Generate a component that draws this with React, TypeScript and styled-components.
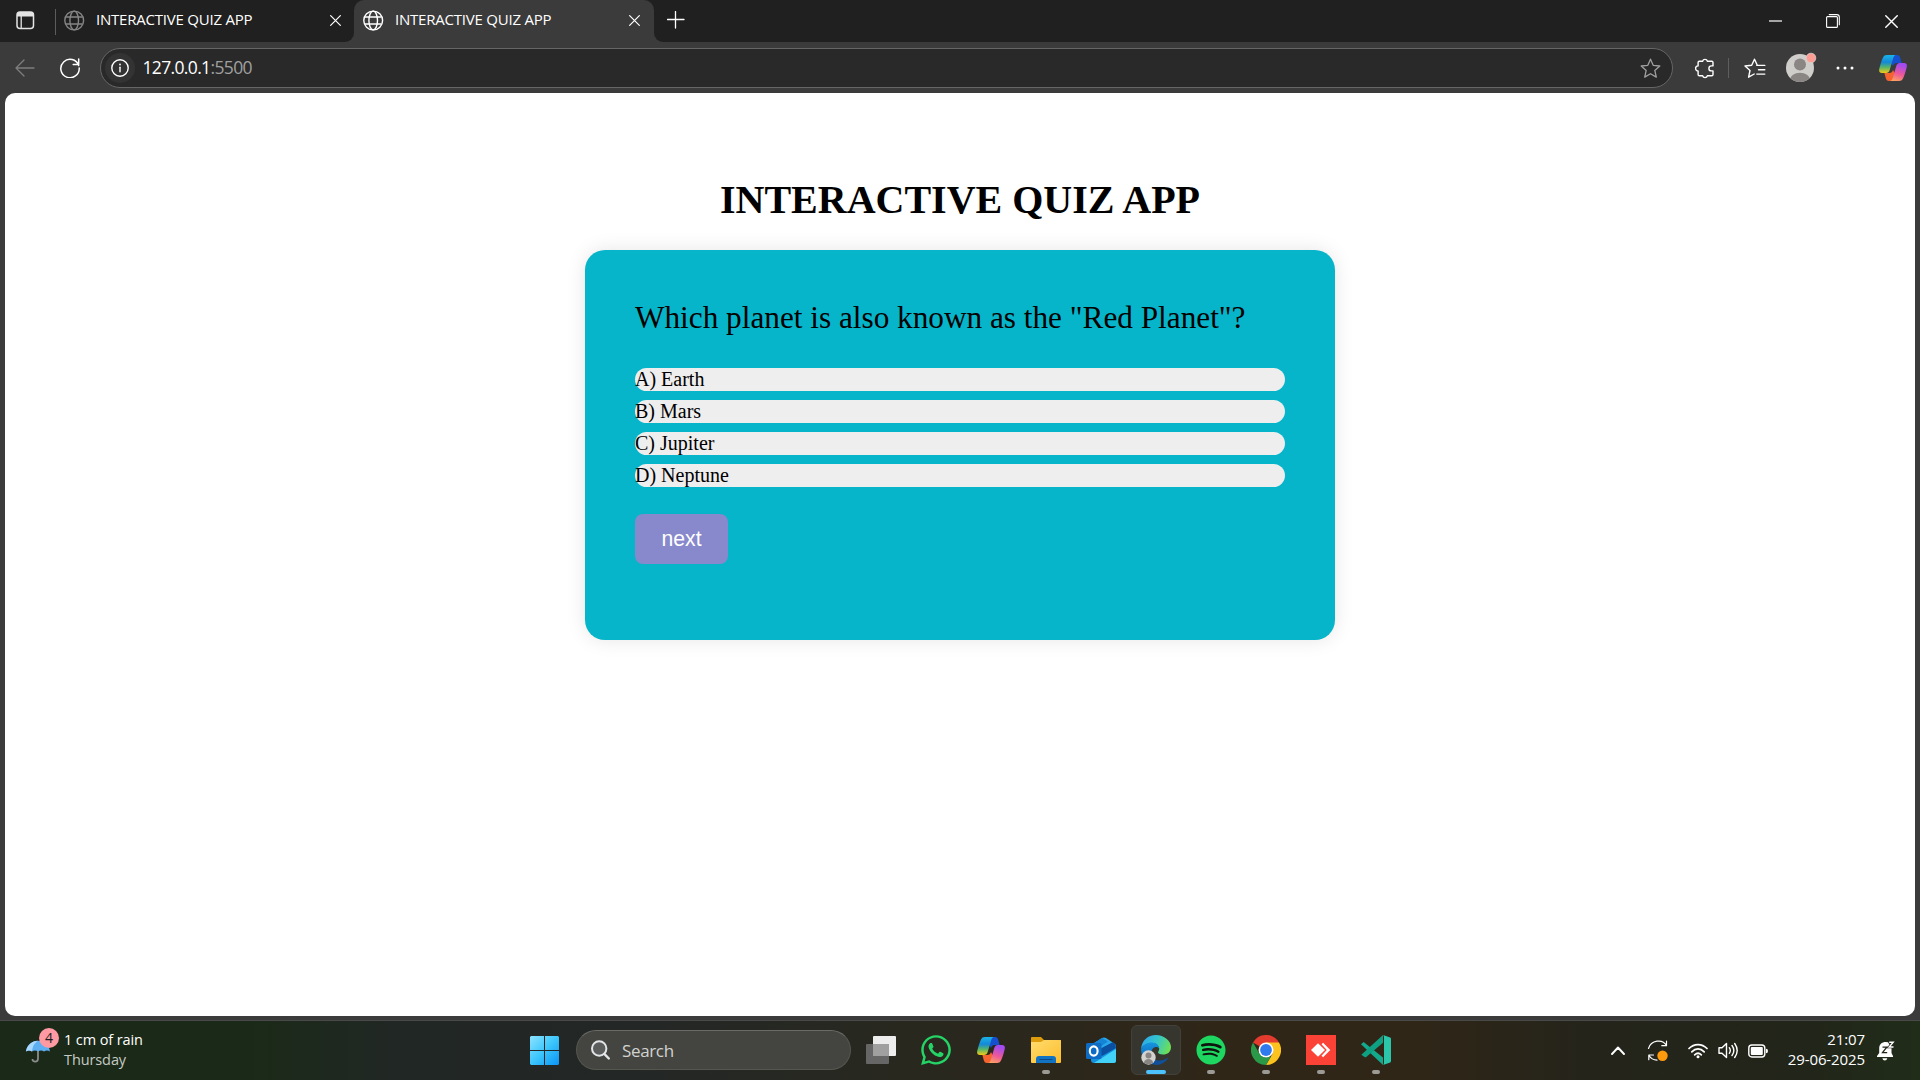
import React, { useId } from "react";
import styled, { createGlobalStyle } from "styled-components";
import { FaWhatsapp, FaSpotify } from "react-icons/fa";

const GlobalStyle = createGlobalStyle`
  html, body { margin: 0; padding: 0; background: #3b3b3b; overflow: hidden; }
  *, *::before, *::after { box-sizing: border-box; }
  svg { display: block; flex: none; }
`;

const uiFont = `"Open Sans", "Noto Sans", sans-serif`;

const Desktop = styled.div`
  width: 1920px;
  height: 1080px;
  display: flex;
  flex-direction: column;
  background: #3b3b3b;
  font-family: ${uiFont};
  color: #fff;
`;

/* ---------- title bar ---------- */

const TitleBar = styled.header`
  height: 43px;
  display: flex;
  background: #3b3b3b;
`;

const StripSection = styled.div<{ $grow?: boolean; $side: "left" | "right" }>`
  display: flex;
  height: 42px;
  background: #202020;
  width: ${(p) => (p.$grow ? "auto" : "354px")};
  flex: ${(p) => (p.$grow ? "1" : "none")};
  border-radius: ${(p) => (p.$side === "left" ? "0 0 9px 0" : "0 0 0 9px")};
`;

const WorkspaceButton = styled.div`
  width: 56px;
  height: 26px;
  margin-top: 9px;
  padding: 2px 0 0 16px;
  border-right: 1px solid #5c5c5c;
`;

const Tab = styled.div<{ $active?: boolean }>`
  display: flex;
  align-items: center;
  width: ${(p) => (p.$active ? "300px" : "298px")};
  height: ${(p) => (p.$active ? "43px" : "40px")};
  padding: 0 ${(p) => (p.$active ? "14px" : "13px")} ${(p) => (p.$active ? "3px" : "0")} ${(p) => (p.$active ? "9px" : "8px")};
  background: ${(p) => (p.$active ? "#3b3b3b" : "transparent")};
`;

const ActiveTabBacking = styled.div`
  background: linear-gradient(#202020 50%, #3b3b3b 50%);
  & > div { border-radius: 10px 10px 0 0; }
`;

const TabTitle = styled.span`
  flex: 1;
  margin-left: 11px;
  padding-bottom: 2px;
  font-size: 15px;
  line-height: 20px;
  letter-spacing: -0.22px;
  white-space: nowrap;
`;

const NewTab = styled.div`
  padding: 11px 0 0 13px;
`;

const WindowControls = styled.div`
  display: flex;
  align-items: center;
  margin-left: auto;
  height: 42px;
`;

const ControlButton = styled.div`
  width: 58px;
  display: flex;
  justify-content: center;
`;

/* ---------- toolbar ---------- */

const Toolbar = styled.nav`
  height: 50px;
  display: flex;
  align-items: center;
`;

const ToolSlot = styled.div<{ $w: number }>`
  width: ${(p) => p.$w}px;
  height: 40px;
  display: flex;
  align-items: center;
  justify-content: center;
  flex: none;
`;

const AddressBar = styled.div`
  width: 1573px;
  height: 40px;
  display: flex;
  align-items: center;
  border: 1px solid #666;
  border-radius: 20px;
  background: #292929;
  padding: 0 11px 0 4px;
`;

const InfoBadge = styled.div`
  width: 30px;
  height: 30px;
  border-radius: 50%;
  background: #333;
  display: flex;
  align-items: center;
  justify-content: center;
`;

const Url = styled.span`
  flex: 1;
  margin-left: 7.5px;
  padding-bottom: 2px;
  font-size: 17.5px;
  line-height: 24px;
  letter-spacing: -0.65px;
`;

const Port = styled.span`
  color: #a0a0a0;
`;

const ToolDivider = styled.div`
  width: 1px;
  height: 20px;
  background: #5e5e5e;
`;

/* ---------- page ---------- */

const Page = styled.main`
  height: 923px;
  margin: 0 5px;
  background: #fff;
  border-radius: 10px;
  display: flex;
  flex-direction: column;
  align-items: center;
  color: #000;
  font-family: "Liberation Serif", "Times New Roman", serif;
`;

const Heading = styled.h1`
  margin: 84px 0 27px;
  font-size: 40px;
  line-height: 46px;
  font-weight: bold;
`;

const QuizCard = styled.section`
  width: 750px;
  height: 390px;
  padding: 50px;
  border-radius: 20px;
  background: #07b5ca;
  box-shadow: 0 0 20px rgba(0, 0, 0, 0.1);
`;

const Question = styled.p`
  margin: 0 0 32px;
  font-size: 31.25px;
  line-height: 36px;
`;

const Options = styled.ul`
  margin: 0 0 27px;
  padding: 0;
  list-style: none;
  display: flex;
  flex-direction: column;
  gap: 9px;
`;

const Option = styled.li`
  height: 23px;
  font-size: 20px;
  line-height: 23px;
  border-radius: 12px;
  background: #eee;
`;

const NextButton = styled.button`
  width: 93px;
  height: 50px;
  padding: 0;
  border: 0;
  border-radius: 8px;
  background: #8888cc;
  color: #fff;
  font: 21.2px "Liberation Sans", Arial, sans-serif;
`;

/* ---------- taskbar ---------- */

const Taskbar = styled.footer`
  height: 60px;
  margin-top: 4px;
  border-top: 1px solid #494949;
  display: grid;
  grid-template-columns: 520px 881px 1fr;
  background: linear-gradient(90deg, #1b2a18 0, #1b2a18 250px, #212725 400px, #232726 620px, #28281f 900px, #302617 1250px, #302617 1400px, #24241b 1600px, #22251a 1800px, #202d19 1920px);
`;

const Weather = styled.div`
  display: flex;
  padding: 5px 0 0 25px;
`;

const WeatherText = styled.div`
  margin: 4px 0 0 4px;
  font-size: 14.5px;
  line-height: 20px;
  letter-spacing: -0.1px;
`;

const Muted = styled.div`
  color: #c6cac5;
`;

const Dock = styled.div`
  display: flex;
  gap: 5px;
  padding-top: 4px;
`;

const AppSlot = styled.div<{ $active?: boolean }>`
  width: 50px;
  height: 50px;
  display: flex;
  flex-direction: column;
  align-items: center;
  padding-top: ${(p) => (p.$active ? "9px" : "10px")};
  border: ${(p) => (p.$active ? "1px solid #42403a" : "0")};
  border-radius: 6px;
  background: ${(p) => (p.$active ? "#36352e" : "transparent")};
`;

const IconBox = styled.div`
  width: 30px;
  height: 30px;
  flex: none;
  display: flex;
  align-items: center;
  justify-content: center;
`;

const Running = styled.div<{ $active?: boolean }>`
  width: ${(p) => (p.$active ? 20 : 8)}px;
  height: 4px;
  margin-top: 5px;
  flex: none;
  border-radius: 2px;
  background: ${(p) => (p.$active ? "#4cc2ff" : "#9c9a95")};
`;

const SearchBox = styled.div`
  width: 275px;
  height: 40px;
  margin: 5px 0 0 1px;
  display: flex;
  align-items: center;
  gap: 12px;
  padding-left: 14px;
  border: 1px solid #55564f;
  border-top-color: #6a6b66;
  border-radius: 20px;
  background: #444540;
  color: #d2d2d0;
  font-size: 17px;
  letter-spacing: -0.35px;
`;

const Spotify = styled.div`
  width: 30px;
  height: 30px;
  border-radius: 50%;
  background: radial-gradient(#10140f 60%, transparent 62%);
`;

const Tray = styled.div`
  display: flex;
  align-items: center;
  justify-content: flex-end;
  padding-right: 23px;
`;

const Clock = styled.div`
  width: 92px;
  margin: -4px 10px 0 0;
  text-align: right;
  font-size: 15px;
  line-height: 20px;
  letter-spacing: -0.1px;
  white-space: nowrap;
`;

/* ---------- icons ---------- */

const stroke = { fill: "none", stroke: "#fff", strokeWidth: 1.3, strokeLinecap: "round", strokeLinejoin: "round" } as const;

const WorkspaceIcon = () => (
  <svg width="19" height="19" viewBox="0 0 19 19">
    <rect x="1" y="1" width="16.5" height="16.5" rx="3" fill="none" stroke="#e4e4e4" strokeWidth="1.5" />
    <path d="M1 5.500V4a3 3 0 0 1 3-3h10.500a3 3 0 0 1 3 3v1.500z" fill="#e4e4e4" />
    <path d="M5.200 5v12" stroke="#e4e4e4" strokeWidth="1.3" />
  </svg>
);

const Globe = ({ color }: { color: string }) => (
  <svg width="21" height="21" viewBox="0 0 21 21" fill="none" stroke={color} strokeWidth="1.4">
    <circle cx="10.2" cy="10.5" r="9.4" />
    <ellipse cx="10.2" cy="10.5" rx="4.3" ry="9.4" />
    <path d="M2 7h16.500M2 14h16.500" />
  </svg>
);

const Cross = ({ size = 11 }: { size?: number }) => (
  <svg width={size} height={size} viewBox="0 0 12 12">
    <path d="M.7.7l10.600 10.600M11.300.7L.7 11.300" {...stroke} />
  </svg>
);

const RestoreIcon = () => (
  <svg width="14" height="14" viewBox="0 0 14 14" {...stroke} strokeWidth="1.1">
    <rect x=".6" y="2.6" width="10.800" height="10.800" rx="1" />
    <path d="M3.200.6h7.600a2.500 2.500 0 0 1 2.500 2.500v7.600" />
  </svg>
);

const StarIcon = () => (
  <svg width="21" height="21" viewBox="0 0 21 21" {...stroke} stroke="#a0a0a0">
    <path d="M10.500 1.200l2.700 6.100 6.600.7-5 4.400 1.500 6.700-5.800-3.400-5.800 3.400 1.500-6.700-5-4.400 6.600-.7z" />
  </svg>
);

const PuzzleIcon = () => (
  <svg width="20" height="21" viewBox="0 0 20 21" {...stroke} strokeWidth="1.4">
    <path d="M4.300 3.200h3.300a2.500 2.500 0 0 1 4.800 0h4.400q1.200 0 1.200 1.200v3.500h-1.600a2.500 2.500 0 0 0 0 5h1.600v3.700q0 1.200-1.200 1.200h-4.400a2.500 2.500 0 0 1-4.800 0H4.300q-1.200 0-1.200-1.200v-3.700a2.500 2.500 0 0 1 0-5V4.400q0-1.200 1.200-1.200z" />
  </svg>
);

const FavoritesIcon = () => (
  <svg width="22" height="21" viewBox="0 0 22 21" {...stroke} strokeWidth="1.4">
    <path d="M12.800 7.400h8M14.500 11.800h6.300M12.800 16.100h8M13.300 7.300L10.500 1.200 7.700 7.300 1 8l5 4.500-1.400 6.700 5.600-3.200" />
  </svg>
);

const Avatar = ({ size = 28 }: { size?: number }) => {
  const id = useId();
  return (
    <svg width={size} height={size} viewBox="0 0 28 28" overflow="visible">
      <clipPath id={id}><circle cx="14" cy="14" r="14" /></clipPath>
      <g clipPath={`url(#${id})`}>
        <path d="M0 0h28v28H0z" fill="#d0cecb" />
        <circle cx="14" cy="10.500" r="6" fill="#8a8684" />
        <ellipse cx="14" cy="26" rx="10" ry="7.300" fill="#8a8684" />
      </g>
      <circle cx="25" cy="4" r="4.800" fill="#ff9d95" stroke="#d6d0cd" strokeWidth=".8" />
    </svg>
  );
};

const CopilotIcon = () => {
  const id = useId();
  return (
    <svg width="28" height="26" viewBox="0 0 28 26">
      <defs>
        <linearGradient id={id + "a"} x1="0" y1="0" x2="0" y2="1">
          <stop offset="0" stopColor="#1bb4e8" /><stop offset=".4" stopColor="#1488d8" />
          <stop offset=".68" stopColor="#55b56b" /><stop offset="1" stopColor="#f4c915" />
        </linearGradient>
        <linearGradient id={id + "b"} x1=".3" y1="0" x2="0" y2="1">
          <stop offset="0" stopColor="#a34bf0" /><stop offset=".5" stopColor="#ee5898" />
          <stop offset="1" stopColor="#ffae58" />
        </linearGradient>
      </defs>
      <path d="M8 0h10c2 0 2.700 1 3.300 3l1.300 5h-5c-2 0-3 1-3.600 3z" fill="#1750cf" />
      <path d="M20 26H10c-2 0-2.700-1-3.300-3l-1.300-5h5c2 0 3-1 3.600-3z" fill="#f5632f" />
      <path d="M8 0h9c-1.500 0-2.300 1.700-2.800 3.300L10.700 15c-.6 2-1.700 3-3.700 3H3c-2.500 0-3.300-1.700-2.700-4.200C1.300 9.700 2.500 5.500 4 2.500 4.800.8 6 0 8 0z" fill={`url(#${id}a)`} />
      <path d="M20 26h-9c1.500 0 2.300-1.700 2.800-3.300L17.300 11c.6-2 1.700-3 3.700-3h4c2.500 0 3.300 1.700 2.700 4.200-1 4.100-2.200 8.300-3.700 11.300-.8 1.700-2 2.500-4 2.500z" fill={`url(#${id}b)`} />
    </svg>
  );
};

const UmbrellaIcon = () => (
  <svg width="35" height="38" viewBox="0 0 35 38">
    <path d="M13 22v10.800q0 2.800-2.800 2.800T7.500 33" fill="none" stroke="#8c8c8c" strokeWidth="1.8" />
    <path d="M1 25.500C2 18.500 7 15 13 14.700 19 15 24 18.500 25 25.500q-3-2-6 0-3-2-6 0-3-2-6 0-3-2-6 0z" fill="#5eaef2" />
    <path d="M1 25.500C2 18.500 7 15 13 14.700 9 17.500 7.500 20.500 7 25.500q-3-2-6 0z" fill="#a8d8ff" />
    <circle cx="24" cy="12" r="10" fill="#ff99a4" />
    <text x="24" y="17" textAnchor="middle" fontSize="14" fill="#1b1b1b" fontFamily={uiFont}>4</text>
  </svg>
);

const WindowsIcon = () => (
  <svg width="30" height="30" viewBox="0 0 30 30">
    <defs>
      <linearGradient id="win" x1="0" y1="0" x2="1" y2="1">
        <stop offset="0" stopColor="#8ce3ff" /><stop offset=".5" stopColor="#3cc6fc" /><stop offset="1" stopColor="#0a93f5" />
      </linearGradient>
    </defs>
    <path d="M1 1H14v14H0V2zM15 1h13l1 1v13H15zM0 16H14v14H1l-1-1zM15 16h14v13l-1 1H15z" fill="url(#win)" />
  </svg>
);

const SearchIcon = () => (
  <svg width="19" height="20" viewBox="0 0 19 20" fill="none" stroke="#e2e5e8" strokeWidth="2">
    <circle cx="8.200" cy="8.500" r="7.200" fill="#5b5d5c" />
    <path d="M13.300 13.800l4.500 4.700" strokeWidth="2.400" strokeLinecap="round" />
  </svg>
);

const TaskViewIcon = () => (
  <svg width="30" height="30" viewBox="0 0 30 30">
    <rect x="7" y="1" width="23" height="20" rx="1" fill="#ededed" />
    <rect x="0" y="9" width="23" height="20" rx="1" fill="#666" />
    <path d="M7 9h16v12H7z" fill="#a0a0a0" />
  </svg>
);

const FolderIcon = () => (
  <svg width="30" height="30" viewBox="0 0 30 30">
    <defs>
      <linearGradient id="folder" x1="0" y1="0" x2="1" y2="1">
        <stop offset="0" stopColor="#ffdc6e" /><stop offset="1" stopColor="#fdbd2c" />
      </linearGradient>
    </defs>
    <path d="M0 3q0-1 1-1h9l3 3h17v4H0z" fill="#dc9c0c" />
    <path d="M0 7h10l3-2h16q1 0 1 1v21q0 1-1 1H1q-1 0-1-1z" fill="url(#folder)" />
    <path d="M5 28v-4q0-3 3-3h14q3 0 3 3v4z" fill="#1173c2" />
    <path d="M8.500 24.500h13" stroke="#0b4a86" strokeWidth="1" />
  </svg>
);

const OutlookIcon = () => (
  <svg width="30" height="30" viewBox="0 0 30 30">
    <path d="M5 10L16 3q2-1 4 0l9 6q1 1 1 2v4L17 22 5 16z" fill="#28a8ea" />
    <path d="M8 17L27 7l2.500 2.500.5 4L17 22z" fill="#0a4fa0" />
    <path d="M5 10l11-7 6 3.500L8 16z" fill="#1583d6" />
    <path d="M5 14l11 7 14-8v13q0 2-2.500 2H8q-3 0-3-3z" fill="#1490df" />
    <path d="M8 28L30 14v12q0 2-2.500 2z" fill="#42d2f8" />
    <rect x="0" y="8" width="15.500" height="16" rx="1.500" fill="#0f6cc4" />
    <ellipse cx="7.700" cy="16" rx="3.900" ry="4.600" fill="none" stroke="#fff" strokeWidth="2.100" />
  </svg>
);

const EdgeIcon = () => (
  <svg width="30" height="30" viewBox="0 0 30 30">
    <defs>
      <linearGradient id="edgeTop" x1="0" y1=".3" x2="1" y2=".6">
        <stop offset="0" stopColor="#2ba8ef" /><stop offset=".5" stopColor="#35c6c8" /><stop offset="1" stopColor="#6fe052" />
      </linearGradient>
      <linearGradient id="edgeSide" x1="0" y1="0" x2="0" y2="1">
        <stop offset="0" stopColor="#1695e0" /><stop offset="1" stopColor="#0c59ac" />
      </linearGradient>
    </defs>
    <path d="M0 14C1 5 7 0 15 0s15 6 15 12c0 5-3.500 7.500-8 7.500-3.500 0-5-1.200-5-2.200 0-.9 1.200-1.300 1.200-3.500 0-3-3-5.800-7.200-5.800C6 8 1.500 10.500 0 14z" fill="url(#edgeTop)" />
    <path d="M0 14C1.500 10 6 7.500 11 7.500c4.200 0 7.200 2.800 7.200 5.800-3-3-7.700-.8-7.700 4.200 0 5.500 4 9.500 9 11.300C9 32 0 25 0 14z" fill="url(#edgeSide)" />
    <path d="M11 15.500c-2.500 7 3 10.500 8.500 10 4-.3 6.500-2.300 8-3.200C25 27 20.500 30 15 30c-5-1-8-8-4-14.500z" fill="#10509a" />
    <g transform="translate(.3 15.300)">
      <circle cx="7.200" cy="7.200" r="7.200" fill="#d4d2cf" />
      <circle cx="7.200" cy="5.200" r="3" fill="#888583" />
      <path d="M2.700 12.400c0-5 9-5 9 0a7 7 0 0 1-9 0z" fill="#888583" />
    </g>
  </svg>
);

const ChromeIcon = () => (
  <svg width="30" height="30" viewBox="0 0 30 30">
    <path d="M15 15L2 7.500A15 15 0 0 1 28 7.500z" fill="#e33b2e" />
    <path d="M15 7.500h13A15 15 0 0 1 15 30l6.500-11.200z" fill="#fcc31e" />
    <path d="M2 7.500L8.500 18.700Q11 22.500 15 22.500l5-1L15 30A15 15 0 0 1 2 7.500z" fill="#2a9a49" />
    <circle cx="15" cy="15" r="7.500" fill="#fff" />
    <circle cx="15" cy="15" r="5.900" fill="#2f7bee" />
  </svg>
);

const AnyDeskIcon = () => (
  <svg width="30" height="30" viewBox="0 0 30 30">
    <path d="M0 0h30v30H0z" fill="#fb4237" />
    <path d="M5 15l7-6.700 7 6.700-7 6.700z" fill="#fff" />
    <path d="M15.500 9.300l1.600-1.500 7.200 7.200-7.200 7.200-1.600-1.500 5.300-5.700z" fill="#fff" />
  </svg>
);

const CodeIcon = () => (
  <svg width="30" height="30" viewBox="0 0 30 30">
    <path d="M0 9.300L2.600 7 22 22.500V30z" fill="#12a98c" />
    <path d="M0.300 19.800L22 0v7.800L5.500 21.700q-1.200 1-2.300 0z" fill="#0ea083" />
    <path d="M22 0l7.200 2.600q.8.400.8 1.400v22q0 1-.8 1.400L22 30q1-.3 1-2V2q0-1.500-1-2z" fill="#2bc5aa" />
  </svg>
);

const SyncIcon = () => (
  <svg width="22" height="22" viewBox="0 0 22 22" {...stroke} strokeWidth="1.2">
    <path d="M1.500 8.500C4 0 15.500-1.500 19.500 5.500M19.500 1v4.700h-4.700M6.500 15H1.800v4.700M2 15.500c2 3.300 5 4.500 8 4.700" />
    <circle cx="15.500" cy="15.700" r="5.200" fill="#ff9a0c" stroke="none" />
  </svg>
);

const WifiIcon = () => (
  <svg width="20" height="16" viewBox="0 0 20 16" {...stroke} strokeWidth="1.700">
    <path d="M1 5.500C6 .2 14 .2 19 5.500M3.800 8.800C7.500 5 12.500 5 16.200 8.800M6.700 11.800c2-2 4.600-2 6.600 0" />
    <circle cx="10" cy="13.700" r="1.500" fill="#fff" stroke="none" />
  </svg>
);

const VolumeIcon = () => (
  <svg width="20" height="17" viewBox="0 0 20 17" {...stroke} strokeWidth="1.400">
    <path d="M1 5.800h3L8.500 1.500v14L4 11.300H1zM11.300 5.700q2 2.800 0 5.600M14 3.500q3.700 5 0 10M16.700 1.500q5 7 0 14" />
  </svg>
);

const BatteryIcon = () => (
  <svg width="20" height="14" viewBox="0 0 20 14">
    <rect x=".8" y="1" width="16" height="12" rx="3" fill="none" stroke="#fff" strokeWidth="1.400" />
    <rect x="2.800" y="3" width="12" height="8" rx="1" fill="#fff" />
    <path d="M18 4.800q2 0 2 2.200t-2 2.200z" fill="#fff" />
  </svg>
);

const BellIcon = () => (
  <svg width="18" height="20" viewBox="0 0 18 20">
    <path d="M9 1C4.500 1 2.200 3.500 2.200 7.500V12L0 15v1h16v-1l-1.500-3V7L11 1.300z" fill="#fff" />
    <path d="M5.300 17.300h5q-.5 2.200-2.500 2.200t-2.500-2.200z" fill="#fff" />
    <path d="M5.500 6.200h4.300L5.500 11.700h4.700" fill="none" stroke="#22251a" strokeWidth="1.300" />
    <path d="M12.200 1.200h4L12.200 6h4.300" fill="none" stroke="#22251a" strokeWidth="2.600" />
    <path d="M12.200 1.200h4L12.200 6h4.300" fill="none" stroke="#fff" strokeWidth="1.400" />
  </svg>
);

/* ---------- data ---------- */

const options = ["A) Earth", "B) Mars", "C) Jupiter", "D) Neptune"];

const apps: { name: string; icon: React.ReactNode; running?: boolean; active?: boolean }[] = [
  { name: "taskview", icon: <TaskViewIcon /> },
  { name: "whatsapp", icon: <FaWhatsapp size={34} color="#25d366" /> },
  { name: "copilot", icon: <CopilotIcon /> },
  { name: "files", icon: <FolderIcon />, running: true },
  { name: "outlook", icon: <OutlookIcon /> },
  { name: "edge", icon: <EdgeIcon />, running: true, active: true },
  { name: "spotify", icon: <Spotify><FaSpotify size={30} color="#1ed760" /></Spotify>, running: true },
  { name: "chrome", icon: <ChromeIcon />, running: true },
  { name: "anydesk", icon: <AnyDeskIcon />, running: true },
  { name: "code", icon: <CodeIcon />, running: true },
];

export default function App() {
  return (
    <Desktop>
      <GlobalStyle />
      <TitleBar>
        <StripSection $side="left">
          <WorkspaceButton><WorkspaceIcon /></WorkspaceButton>
          <Tab>
            <Globe color="#858585" />
            <TabTitle>INTERACTIVE QUIZ APP</TabTitle>
            <Cross />
          </Tab>
        </StripSection>
        <ActiveTabBacking>
          <Tab $active>
            <Globe color="#fff" />
            <TabTitle>INTERACTIVE QUIZ APP</TabTitle>
            <Cross />
          </Tab>
        </ActiveTabBacking>
        <StripSection $side="right" $grow>
          <NewTab>
            <svg width="18" height="18" viewBox="0 0 18 18"><path d="M8.500 .5v16.500M.5 8.500h16.500" {...stroke} /></svg>
          </NewTab>
          <WindowControls>
            <ControlButton><svg width="13" height="3" viewBox="0 0 13 3"><path d="M0 1h13" stroke="#fff" strokeWidth="1.200" /></svg></ControlButton>
            <ControlButton><RestoreIcon /></ControlButton>
            <ControlButton><Cross size={13} /></ControlButton>
          </WindowControls>
        </StripSection>
      </TitleBar>

      <Toolbar>
        <ToolSlot $w={50}>
          <svg width="20" height="18" viewBox="0 0 20 18"><path d="M19 9H1M9 1L1 9l8 8" {...stroke} stroke="#7d7d7d" /></svg>
        </ToolSlot>
        <ToolSlot $w={40}>
          <svg width="20" height="20" viewBox="0 0 20 20" {...stroke} strokeWidth="1.500">
            <path d="M18.700 7.500A9.200 9.200 0 1 0 19.200 10M18.700 1v5.500h-5.500" />
          </svg>
        </ToolSlot>
        <ToolSlot $w={10} />
        <AddressBar>
          <InfoBadge>
            <svg width="18" height="18" viewBox="0 0 18 18" {...stroke} strokeWidth="1.400">
              <circle cx="9" cy="9" r="8.200" />
              <path d="M9 8.300v4.400" />
              <circle cx="9" cy="5.500" r=".9" fill="#fff" stroke="none" />
            </svg>
          </InfoBadge>
          <Url>127.0.0.1<Port>:5500</Port></Url>
          <StarIcon />
        </AddressBar>
        <ToolSlot $w={8} />
        <ToolSlot $w={47}><PuzzleIcon /></ToolSlot>
        <ToolDivider />
        <ToolSlot $w={52}><FavoritesIcon /></ToolSlot>
        <ToolSlot $w={38}><Avatar /></ToolSlot>
        <ToolSlot $w={52}>
          <svg width="18" height="4" viewBox="0 0 18 4" fill="#fff"><circle cx="2" cy="2" r="1.500" /><circle cx="9" cy="2" r="1.500" /><circle cx="16" cy="2" r="1.500" /></svg>
        </ToolSlot>
        <ToolSlot $w={44}><CopilotIcon /></ToolSlot>
      </Toolbar>

      <Page>
        <Heading>INTERACTIVE QUIZ APP</Heading>
        <QuizCard>
          <Question>Which planet is also known as the "Red Planet"?</Question>
          <Options>
            {options.map((o) => <Option key={o}>{o}</Option>)}
          </Options>
          <NextButton>next</NextButton>
        </QuizCard>
      </Page>

      <Taskbar>
        <Weather>
          <UmbrellaIcon />
          <WeatherText>
            1 cm of rain
            <Muted>Thursday</Muted>
          </WeatherText>
        </Weather>
        <Dock>
          <AppSlot><WindowsIcon /></AppSlot>
          <SearchBox><SearchIcon />Search</SearchBox>
          {apps.map((a) => (
            <AppSlot key={a.name} $active={a.active}>
              <IconBox>{a.icon}</IconBox>
              {a.running && <Running $active={a.active} />}
            </AppSlot>
          ))}
        </Dock>
        <Tray>
          <ToolSlot $w={40}>
            <svg width="14" height="9" viewBox="0 0 14 9"><path d="M1 8l6-6.500L13 8" {...stroke} strokeWidth="1.900" /></svg>
          </ToolSlot>
          <ToolSlot $w={40}><SyncIcon /></ToolSlot>
          <ToolSlot $w={5} />
          <ToolSlot $w={30}><WifiIcon /></ToolSlot>
          <ToolSlot $w={30}><VolumeIcon /></ToolSlot>
          <ToolSlot $w={30}><BatteryIcon /></ToolSlot>
          <Clock>
            <div>21:07</div>
            <div>29-06-2025</div>
          </Clock>
          <ToolSlot $w={22}><BellIcon /></ToolSlot>
        </Tray>
      </Taskbar>
    </Desktop>
  );
}
